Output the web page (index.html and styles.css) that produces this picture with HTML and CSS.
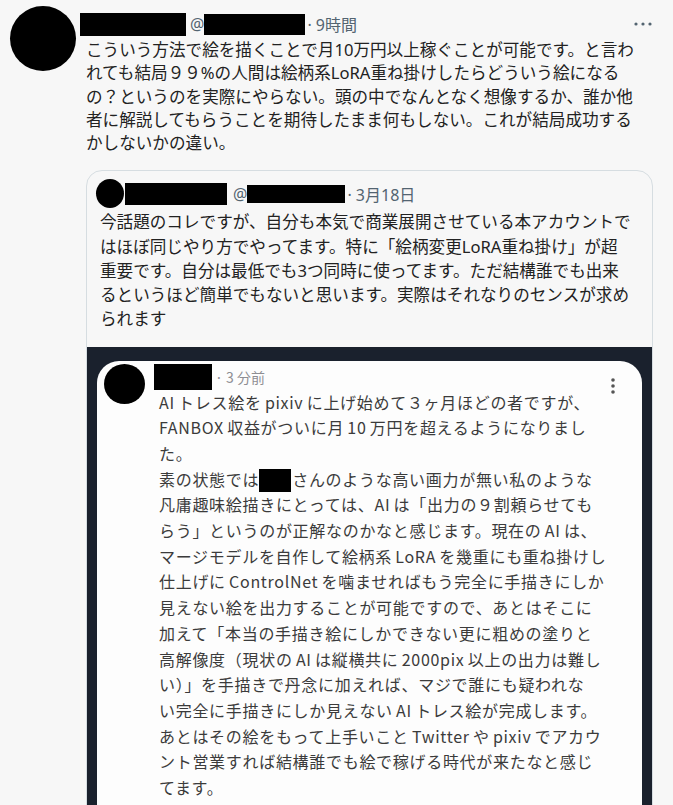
FILE: index.html
```html
<!DOCTYPE html>
<html>
<head>
    <meta charset="utf-8">
    <title>Tweet</title>
    <link rel="stylesheet" href="styles.css">
</head>
<body>
    <div class="tweet">
        <div class="avatar"></div>
        <div class="tweet-main">
            <div class="tweet-head">
                <span class="name-box"></span>
                <span class="at">@</span>
                <span class="handle-box"></span>
                <span class="time">· 9時間</span>
                <svg class="more" width="18" height="4" viewBox="0 0 18 4">
                    <circle cx="2" cy="2" r="1.6"></circle>
                    <circle cx="9" cy="2" r="1.6"></circle>
                    <circle cx="16" cy="2" r="1.6"></circle>
                </svg>
            </div>
            <div class="tweet-text">
                こういう方法で絵を描くことで月10万円以上稼ぐことが可能です。と言わ<br>
                れても結局９９%の人間は絵柄系LoRA重ね掛けしたらどういう絵になる<br>
                の？というのを実際にやらない。頭の中でなんとなく想像するか、誰か他<br>
                者に解説してもらうことを期待したまま何もしない。これが結局成功する<br>
                かしないかの違い。
            </div>

            <div class="quote">
                <div class="quote-head">
                    <span class="q-avatar"></span>
                    <span class="q-name-box"></span>
                    <span class="at q-at">@</span>
                    <span class="q-handle-box"></span>
                    <span class="time">· 3月18日</span>
                </div>
                <div class="quote-text">
                    今話題のコレですが、自分も本気で商業展開させている本アカウントで<br>
                    はほぼ同じやり方でやってます。特に「絵柄変更LoRA重ね掛け」が超<br>
                    重要です。自分は最低でも3つ同時に使ってます。ただ結構誰でも出来<br>
                    るというほど簡単でもないと思います。実際はそれなりのセンスが求め<br>
                    られます
                </div>

                <div class="shot">
                    <div class="shot-card">
                        <span class="s-avatar"></span>
                        <div class="s-body">
                            <div class="s-head">
                                <span class="s-name-box"></span>
                                <span class="s-time">· 3 分前</span>
                                <svg class="kebab" width="6" height="20" viewBox="0 0 6 20">
                                    <circle cx="3" cy="3" r="1.8"></circle>
                                    <circle cx="3" cy="9" r="1.8"></circle>
                                    <circle cx="3" cy="15" r="1.8"></circle>
                                </svg>
                            </div>
                            <div class="s-text">
                                AI トレス絵を pixiv に上げ始めて３ヶ月ほどの者ですが、<br>
                                FANBOX 収益がついに月 10 万円を超えるようになりまし<br>
                                た。<br>
                                素の状態では<span class="redact"></span>さんのような高い画力が無い私のような<br>
                                凡庸趣味絵描きにとっては、AI は「出力の９割頼らせても<br>
                                らう」というのが正解なのかなと感じます。現在の AI は、<br>
                                マージモデルを自作して絵柄系 LoRA を幾重にも重ね掛けし<br>
                                仕上げに ControlNet を噛ませればもう完全に手描きにしか<br>
                                見えない絵を出力することが可能ですので、あとはそこに<br>
                                加えて「本当の手描き絵にしかできない更に粗めの塗りと<br>
                                高解像度（現状の AI は縦横共に 2000pix 以上の出力は難し<br>
                                い）」を手描きで丹念に加えれば、マジで誰にも疑われな<br>
                                い完全に手描きにしか見えない AI トレス絵が完成します。<br>
                                あとはその絵をもって上手いこと Twitter や pixiv でアカウ<br>
                                ント営業すれば結構誰でも絵で稼げる時代が来たなと感じ<br>
                                てます。
                            </div>
                        </div>
                    </div>
                </div>
            </div>
        </div>
    </div>
</body>
</html>
```

FILE: styles.css
```css
body {
    margin: 0;
    height: 805px;
    overflow: hidden;
    background-color: #f7f7f7;
    color: #222;
    font-family: "Noto Sans", "Noto Sans CJK JP", sans-serif;
}

.tweet {
    display: flex;
    padding: 6px 0 0 10px;
}

.avatar {
    flex: none;
    width: 66px;
    height: 65px;
    border-radius: 50%;
    background-color: #000;
}

.tweet-main {
    width: 567px;
    margin-left: 10px;
}

.tweet-head {
    display: flex;
    align-items: center;
    height: 24px;
    margin: 6px 0 0 -6px;
    font-size: 16px;
}

.name-box {
    width: 106px;
    height: 23px;
    background-color: #000;
}

.at {
    margin-left: 4px;
    color: #536471;
}

.handle-box {
    width: 101px;
    height: 21px;
    background-color: #000;
}

.time {
    margin-left: 2px;
    color: #536471;
}

.more {
    margin-left: auto;
    margin-right: 1px;
    fill: #536471;
}

.tweet-text {
    margin-top: 2px;
    font-size: 16.6px;
    line-height: 23.3px;
    white-space: nowrap;
}

.quote {
    margin-top: 16px;
    border: 1px solid #d6dde1;
    border-radius: 16px;
    overflow: hidden;
}

.quote-head {
    display: flex;
    align-items: center;
    padding: 8px 9px 0;
    font-size: 16px;
}

.q-avatar {
    width: 28px;
    height: 29px;
    border-radius: 50%;
    background-color: #000;
}

.q-name-box {
    width: 102px;
    height: 22px;
    margin-left: 1px;
    background-color: #000;
}

.q-at {
    margin-left: 6px;
}

.q-handle-box {
    width: 98px;
    height: 18px;
    background-color: #000;
}

.quote-text {
    margin-top: 2px;
    padding-left: 13px;
    font-size: 16.6px;
    line-height: 24.2px;
    white-space: nowrap;
}

.shot {
    margin-top: 15px;
    padding: 14px 10px 0;
    background-color: #1a212d;
}

.shot-card {
    display: flex;
    padding: 3px 0 60px 7px;
    border-radius: 22px 22px 0 0;
    background-color: #fdfdfd;
}

.s-avatar {
    flex: none;
    width: 41px;
    height: 40px;
    border-radius: 50%;
    background-color: #000;
}

.s-body {
    flex: 1;
    margin-left: 9px;
    padding-right: 26px;
}

.s-head {
    display: flex;
    align-items: center;
    height: 26px;
}

.s-name-box {
    width: 58px;
    height: 26px;
    background-color: #000;
}

.s-time {
    margin-left: 3px;
    color: #8e8e93;
    font-family: "Noto Sans CJK JP", sans-serif;
    font-size: 14px;
}

.kebab {
    align-self: flex-start;
    margin: 13px 0 0 auto;
    fill: #555;
}

.s-text {
    padding-left: 5px;
    color: #3b3b3b;
    font-family: "Noto Sans CJK JP", sans-serif;
    font-size: 16px;
    letter-spacing: 0.7px;
    word-spacing: -1px;
    line-height: 25.7px;
    white-space: nowrap;
}

.redact {
    display: inline-block;
    width: 32px;
    height: 23px;
    margin-right: 1px;
    vertical-align: -6px;
    background-color: #000;
}
```
